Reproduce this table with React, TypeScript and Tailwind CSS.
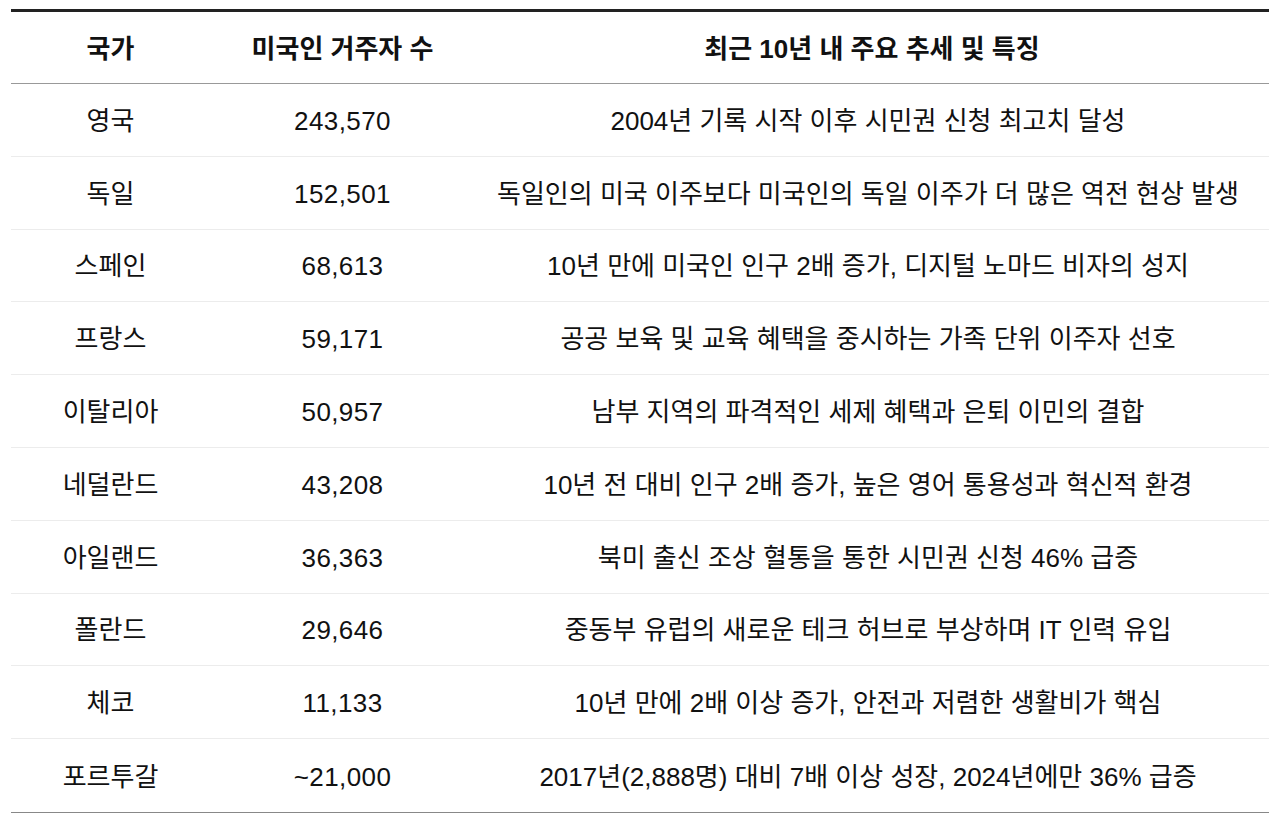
const rows = [
  ["영국", "243,570", "2004년 기록 시작 이후 시민권 신청 최고치 달성"],
  ["독일", "152,501", "독일인의 미국 이주보다 미국인의 독일 이주가 더 많은 역전 현상 발생"],
  ["스페인", "68,613", "10년 만에 미국인 인구 2배 증가, 디지털 노마드 비자의 성지"],
  ["프랑스", "59,171", "공공 보육 및 교육 혜택을 중시하는 가족 단위 이주자 선호"],
  ["이탈리아", "50,957", "남부 지역의 파격적인 세제 혜택과 은퇴 이민의 결합"],
  ["네덜란드", "43,208", "10년 전 대비 인구 2배 증가, 높은 영어 통용성과 혁신적 환경"],
  ["아일랜드", "36,363", "북미 출신 조상 혈통을 통한 시민권 신청 46% 급증"],
  ["폴란드", "29,646", "중동부 유럽의 새로운 테크 허브로 부상하며 IT 인력 유입"],
  ["체코", "11,133", "10년 만에 2배 이상 증가, 안전과 저렴한 생활비가 핵심"],
  ["포르투갈", "~21,000", "2017년(2,888명) 대비 7배 이상 성장, 2024년에만 36% 급증"],
];

export default function App() {
  return (
    <div className="min-h-[820px] bg-white px-[11px] pt-[9px] font-['Liberation_Sans','Noto_Sans_CJK_KR',sans-serif] text-[26px] text-[#111]">
      <div className="border-t-[3px] border-b-[1.5px] border-t-[#222] border-b-[#888]">
        <div className="grid h-[72px] grid-cols-[199px_265px_1fr] items-center border-b-[1.5px] border-[#999] pt-[4px] text-center font-bold">
          <div>국가</div>
          <div>미국인 거주자 수</div>
          <div>최근 10년 내 주요 추세 및 특징</div>
        </div>
        {rows.map(([country, count, trend], i) => (
          <div
            key={country}
            className={
              "grid h-[72.8px] grid-cols-[199px_265px_1fr] items-center pt-[3px] text-center" +
              (i < rows.length - 1 ? " border-b border-[#ececec]" : "")
            }
          >
            <div>{country}</div>
            <div className="tracking-[0.4px]">{count}</div>
            <div className="pr-[8px]">{trend}</div>
          </div>
        ))}
      </div>
    </div>
  );
}
